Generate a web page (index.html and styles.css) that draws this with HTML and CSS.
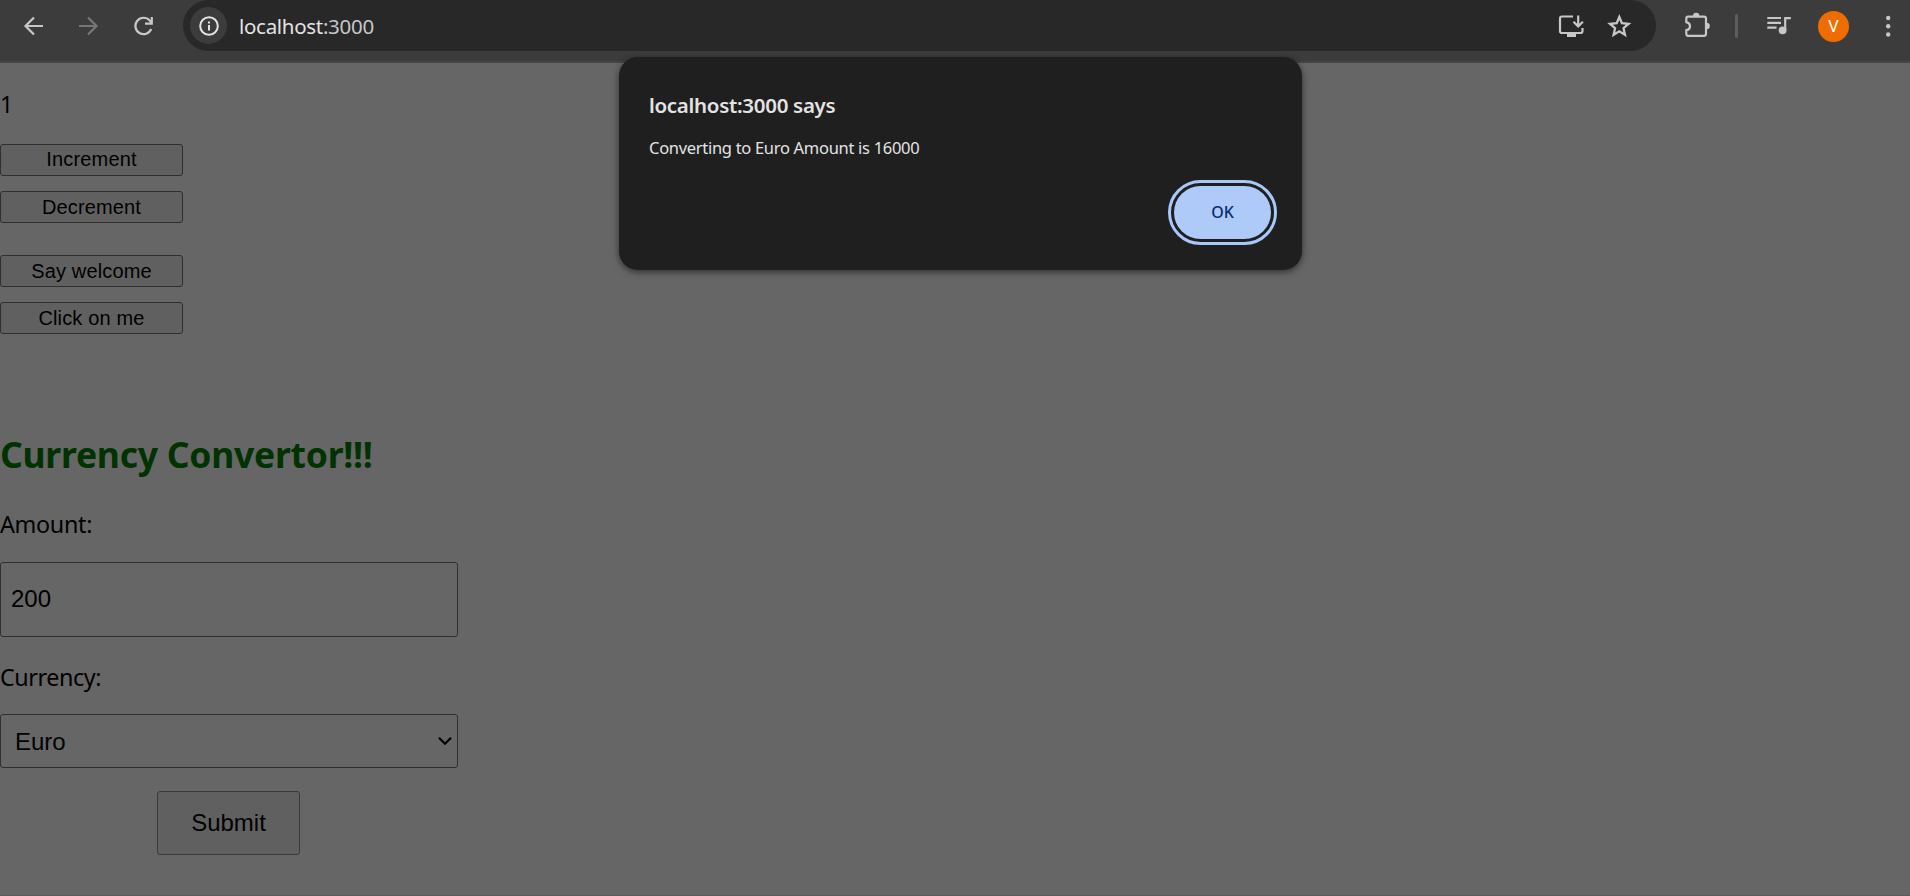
FILE: index.html
```html
<!DOCTYPE html>
<html lang="en">
<head>
<meta charset="utf-8">
<title>localhost:3000</title>
<link rel="stylesheet" href="styles.css">
</head>
<body>
<header class="toolbar">
  <nav class="nav">
    <svg class="icon" viewBox="18 0 32 52"><path d="M43 26H26M34 17.500L25.500 26L34 34.500"/></svg>
    <svg class="icon icon-off" viewBox="72 0 32 52"><path d="M79 26H96M88 17.500L96.500 26L88 34.500"/></svg>
    <svg class="icon" viewBox="128 0 32 52"><path d="M151.200 29A8.200 8.200 0 1 1 149.800 20.600L152 23.200M151.800 17V23.700H145"/></svg>
  </nav>
  <div class="omnibox">
    <span class="site-info"><svg class="info" viewBox="0 0 20 20"><circle cx="10" cy="10" r="8.800"/><path d="M10 9v5.500M10 5.500v2"/></svg></span>
    <span class="url">localhost<span class="port">:3000</span></span>
    <span class="omni-icons">
      <svg class="icon" viewBox="1555 0 32 52"><path d="M1573 16.500H1562Q1560 16.500 1560 18.500V31Q1560 33 1562 33H1580.500Q1582.500 33 1582.500 31V28M1578.200 15.500V26M1573.500 21.700L1578.200 26.400L1582.900 21.700"/><path class="solid" d="M1567 33h9v4h-9z"/></svg>
      <svg class="icon" viewBox="1603 0 32 52"><path class="star" d="M1619.300 17L1621.900 23.200L1628.600 23.800L1623.500 28.200L1625 34.800L1619.300 31.300L1613.600 34.800L1615.100 28.200L1610 23.800L1616.700 23.200Z"/></svg>
    </span>
  </div>
  <div class="actions">
    <svg class="icon" viewBox="1681 0 32 52"><path d="M1688 16.700H1704Q1706 16.700 1706 18.700V33.800Q1706 35.800 1704 35.800H1688Q1686.300 35.800 1686.300 33.800V30.200Q1690 29.500 1690 26.200Q1690 23 1686.300 22.200V18.700Q1686.300 16.700 1688 16.700Z"/><path class="solid" d="M1693 16a3.200 3.200 0 0 1 6.400 0zM1706.500 22.700a3.300 3.300 0 0 1 0 6.600z"/></svg>
    <span class="divider"></span>
    <svg class="icon" viewBox="1763 0 32 52"><path d="M1767.300 18H1781M1767.300 22.900H1781M1767.300 27.700H1776.500M1785.200 30V18.200H1790.800"/><circle class="solid" cx="1782.600" cy="30.300" r="3.900"/></svg>
    <span class="avatar">V</span>
    <svg class="icon" viewBox="1872 0 32 52"><g class="solid"><circle cx="1888.200" cy="18" r="2.200"/><circle cx="1888.200" cy="26.200" r="2.200"/><circle cx="1888.200" cy="34.500" r="2.200"/></g></svg>
  </div>
</header>
<main class="page">
  <p class="count">1</p>
  <div class="buttons">
    <button class="btn first">Increment</button>
    <button class="btn">Decrement</button>
  </div>
  <div class="buttons">
    <button class="btn">Say welcome</button>
    <button class="btn">Click on me</button>
  </div>
  <h1 class="heading">Currency Convertor!!!</h1>
  <form class="form">
    <label class="label" for="amount">Amount:</label>
    <input class="field" id="amount" type="text" value="200">
    <label class="label label-currency" for="currency">Currency:</label>
    <div class="select-wrap">
      <select class="select" id="currency"><option>Euro</option></select>
      <svg class="chevron" viewBox="0 0 16 10"><path d="M2 1.800L8 7.800L14 1.800"/></svg>
    </div>
    <button class="submit" type="button">Submit</button>
  </form>
</main>
<div class="dialog" role="alertdialog">
  <h2 class="dialog-title">localhost:3000 says</h2>
  <p class="dialog-text">Converting to Euro Amount is 16000</p>
  <button class="ok">OK</button>
</div>
</body>
</html>
```
FILE: styles.css
```css
* { box-sizing: border-box; }
body {
  margin: 0;
  height: 896px;
  overflow: hidden;
  display: flex;
  flex-direction: column;
  background: #666;
  font-family: "Noto Sans", sans-serif;
  color: #000;
}
h1, h2, p { margin: 0; }
button, input, select { margin: 0; color: #000; font-family: "Liberation Sans", Arial, sans-serif; }

.toolbar {
  display: flex;
  align-items: flex-start;
  flex: none;
  height: 63px;
  background: #3c3c3c;
  border-bottom: 2px solid #454545;
}
.nav { display: flex; width: 183px; padding-left: 18px; gap: 22px; }
.nav .icon:last-child { margin-left: 2px; }
.icon { flex: none; width: 32px; height: 52px; fill: none; stroke: #c7c7c7; stroke-width: 2.2; }
.icon-off { stroke: #777; }
.star { stroke-width: 2.3; }
.solid { fill: #c7c7c7; stroke: none; }
.omnibox {
  display: flex;
  align-items: center;
  width: 1473px;
  height: 51px;
  padding: 0 21px 0 7px;
  border-radius: 26px;
  background: #282828;
}
.site-info { display: grid; place-items: center; width: 37px; height: 37px; border-radius: 50%; background: #3c3c3c; }
.info { width: 20px; height: 20px; fill: none; stroke: #e3e3e3; stroke-width: 2; }
.url { margin-left: 12px; font-size: 20.5px; line-height: 28px; letter-spacing: -0.3px; color: #e3e3e3; }
.port { color: #c7c7c7; }
.omni-icons { display: flex; gap: 16px; margin-left: auto; }
.actions { display: flex; padding-left: 25px; }
.divider { width: 3px; height: 24px; margin: 14px 25px 0 22px; border-radius: 2px; background: #5d5d5d; }
.avatar {
  width: 31px;
  height: 31px;
  margin: 11px 23px 0;
  border-radius: 50%;
  background: #ef6c00;
  color: #fff;
  font: 17px/31px Roboto, sans-serif;
  text-align: center;
}

.page { flex: 1; border-bottom: 1px solid #5c5c5c; }
.count { height: 81px; padding-top: 24px; font-size: 23px; line-height: 34px; }
.buttons { display: flex; flex-direction: column; gap: 15px; margin-bottom: 32px; }
.btn {
  width: 183px;
  height: 32px;
  padding: 0;
  border: 1px solid #2f2f2f;
  border-radius: 3px;
  background: #606060;
  font-size: 20px;
  line-height: 30px;
  letter-spacing: 0.15px;
}
.first { padding-bottom: 2px; line-height: 28px; }
.heading {
  margin-top: 95px;
  font-size: 35.5px;
  line-height: 50px;
  letter-spacing: -0.25px;
  color: #030;
}
.form { display: flex; flex-direction: column; width: 458px; }
.label { margin-top: 28px; font-size: 23.3px; line-height: 34px; letter-spacing: -0.3px; }
.field {
  height: 75px;
  margin-top: 21px;
  padding: 0 10px 2px;
  border: 1px solid #2f2f2f;
  border-radius: 3px;
  background: #666;
  font-size: 24px;
}
.label-currency { margin-top: 23px; letter-spacing: -0.4px; }
.select-wrap { display: grid; margin-top: 20px; align-items: center; }
.select {
  grid-area: 1 / 1;
  height: 54px;
  padding: 0 14px;
  appearance: none;
  border: 1px solid #2f2f2f;
  border-radius: 3px;
  background: #666;
  font-size: 24px;
}
.chevron { grid-area: 1 / 1; justify-self: end; width: 16px; height: 10px; margin-right: 5px; fill: none; stroke: #000; stroke-width: 2.2; }
.submit {
  width: 143px;
  height: 64px;
  margin: 23px 0 0 157px;
  padding: 0;
  border: 1px solid #3a3a3a;
  border-radius: 3px;
  background: #606060;
  font-size: 24px;
}

.dialog {
  position: absolute;
  left: 619px;
  top: 57px;
  width: 683px;
  height: 213px;
  display: flex;
  flex-direction: column;
  padding: 31px 31px 0 30px;
  border-radius: 19px;
  background: #1f1f1f;
  box-shadow: 0 2px 7px rgba(0, 0, 0, 0.55);
  color: #e3e3e3;
}
.dialog-title { font-size: 20.5px; font-weight: 600; line-height: 34px; letter-spacing: -0.3px; }
.dialog-text { margin-top: 14px; font-size: 16.5px; line-height: 24px; letter-spacing: -0.3px; }
.ok {
  align-self: flex-end;
  width: 97px;
  height: 53px;
  margin: 26px 0 0;
  padding: 0 0 1px;
  border: 0;
  border-radius: 27px;
  background: #aecaf8;
  outline: 3px solid #a8c7fa;
  outline-offset: 3px;
  font: 500 16px "Noto Sans", sans-serif;
  color: #062e6f;
}
```
